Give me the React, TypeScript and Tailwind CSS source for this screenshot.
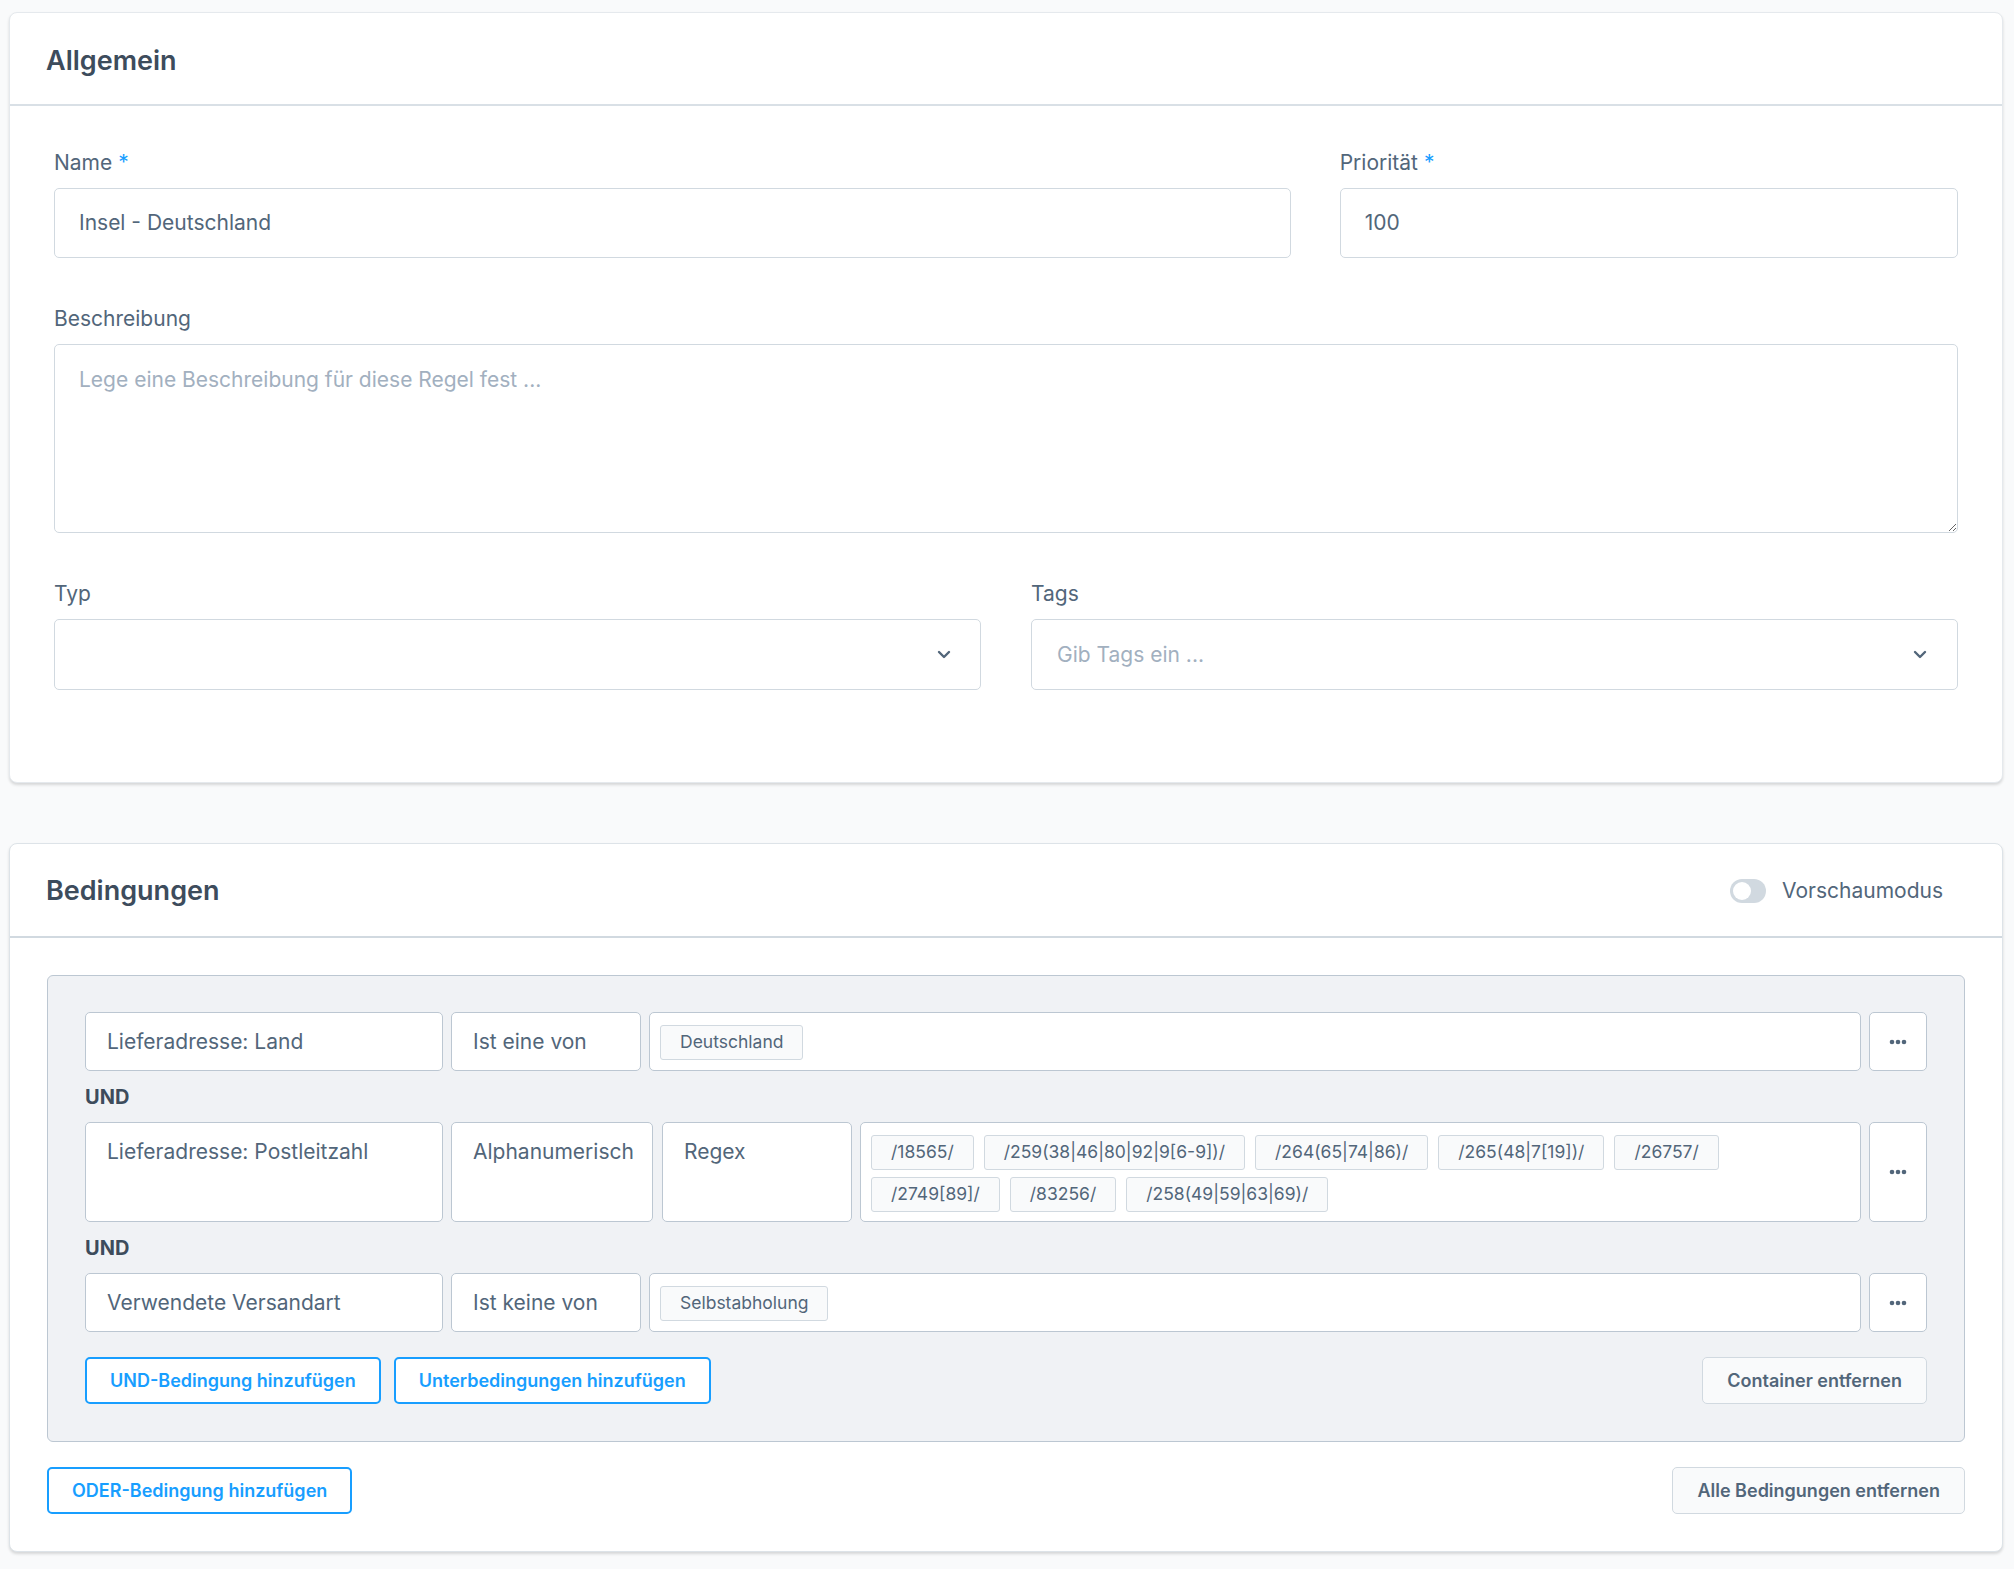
import React from "react";

// Regel-Detailseite: Allgemein + Bedingungen.
const FONT = { fontFamily: "Inter, 'Noto Sans', sans-serif" };

const Chevron: React.FC = () => (
  <svg width="14" height="9" viewBox="0 0 14 9" fill="none">
    <path d="M2 2l5 5 5-5" stroke="#52667a" strokeWidth="2.4" strokeLinecap="round" strokeLinejoin="round" />
  </svg>
);

const Dots: React.FC = () => (
  <svg width="18" height="6" viewBox="0 0 18 6" fill="#52667a">
    <circle cx="3" cy="3" r="2.3" />
    <circle cx="9" cy="3" r="2.3" />
    <circle cx="15" cy="3" r="2.3" />
  </svg>
);

interface FieldProps {
  label: string;
  required?: boolean;
  children: React.ReactNode;
}

const Field: React.FC<FieldProps> = ({ label, required, children }) => (
  <div className="flex flex-col">
    <label className="mb-[11px] text-[21px] leading-[28px] text-[#52667a]">
      {label}
      {required && <span className="ml-[6px] text-[#189eff]">*</span>}
    </label>
    {children}
  </div>
);

const Tag: React.FC<{ text: string }> = ({ text }) => (
  <span className="flex h-[35px] items-center rounded-[3px] border border-[#d1d9e0] bg-[#f9fafb] px-[19px] text-[17.5px] text-[#52667a]">
    {text}
  </span>
);

const Box: React.FC<{ className?: string; children?: React.ReactNode }> = ({ className = "", children }) => (
  <div className={`rounded-[5px] border border-[#bcc7d2] bg-white px-[21px] pt-[15px] text-[21px] leading-[28px] text-[#52667a] ${className}`}>
    {children}
  </div>
);

const TagBox: React.FC<{ tags: string[] }> = ({ tags }) => (
  <div className="flex flex-1 flex-wrap content-start gap-x-[10px] gap-y-[7px] rounded-[5px] border border-[#bcc7d2] bg-white px-[10px] pt-[12px] pb-[9px]">
    {tags.map((t) => (
      <Tag key={t} text={t} />
    ))}
  </div>
);

const DotsButton: React.FC = () => (
  <button className="flex w-[58px] items-center justify-center rounded-[5px] border border-[#bcc7d2] bg-white">
    <Dots />
  </button>
);

const Und: React.FC = () => (
  <div className="flex h-[51px] items-center text-[20px] font-bold text-[#3d4c5c]">UND</div>
);

export default function App() {
  return (
    <div className="min-h-screen bg-[#f9fafb] pt-[12px] pr-[11px] pb-[16px] pl-[9px]" style={FONT}>
      {/* Allgemein */}
      <section className="rounded-[8px] border border-[#e5e9ed] bg-white shadow-[0_2px_3px_rgba(0,0,0,0.14)]">
        <header className="flex h-[93px] items-center border-b-2 border-[#d9e0e6] px-[36px] pt-[5px]">
          <h2 className="text-[27px] font-semibold text-[#3d4c5c]">Allgemein</h2>
        </header>
        <div className="flex flex-col gap-[47px] px-[44px] pt-[43px] pb-[92px]">
          <div className="grid grid-cols-[2fr_1fr] gap-x-[49px]">
            <Field label="Name" required>
              <div className="flex h-[70px] items-center rounded-[5px] border border-[#d1d9e0] px-[24px] text-[21px] text-[#52667a]">
                Insel - Deutschland
              </div>
            </Field>
            <Field label="Priorität" required>
              <div className="flex h-[70px] items-center rounded-[5px] border border-[#d1d9e0] px-[24px] text-[21px] text-[#52667a]">
                100
              </div>
            </Field>
          </div>
          <Field label="Beschreibung">
            <textarea
              className="h-[189px] rounded-[5px] border border-[#d1d9e0] px-[24px] py-[21px] text-[21px] leading-[28px] text-[#52667a] outline-none placeholder:text-[#a2b0bf]"
              placeholder="Lege eine Beschreibung für diese Regel fest ..."
            />
          </Field>
          <div className="grid grid-cols-2 gap-x-[50px]">
            <Field label="Typ">
              <div className="flex h-[71px] items-center justify-end rounded-[5px] border border-[#d1d9e0] pr-[29px]">
                <Chevron />
              </div>
            </Field>
            <Field label="Tags">
              <div className="flex h-[71px] items-center justify-between rounded-[5px] border border-[#d1d9e0] pr-[30px] pl-[25px]">
                <span className="text-[21px] text-[#a2b0bf]">Gib Tags ein ...</span>
                <Chevron />
              </div>
            </Field>
          </div>
        </div>
      </section>

      {/* Bedingungen */}
      <section className="mt-[60px] rounded-[8px] border border-[#dde3e8] bg-white shadow-[0_2px_3px_rgba(0,0,0,0.14)]">
        <header className="flex h-[94px] items-center justify-between border-b-2 border-[#d1d9e0] pr-[59px] pl-[36px] pt-[2px]">
          <h2 className="text-[27px] font-semibold text-[#3d4c5c]">Bedingungen</h2>
          <div className="flex items-center gap-[16px]">
            <span className="relative h-[24px] w-[36px] rounded-full bg-[#d1d9e0]">
              <span className="absolute top-[3px] left-[3px] h-[18px] w-[18px] rounded-full bg-white" />
            </span>
            <span className="text-[21px] text-[#52667a]">Vorschaumodus</span>
          </div>
        </header>
        <div className="px-[37px] pt-[37px] pb-[37px]">
          <div className="rounded-[6px] border border-[#bcc7d2] bg-[#f0f2f5] px-[37px] pt-[36px] pb-[37px]">
            <div className="flex h-[59px] gap-[8px]">
              <Box className="w-[358px]">Lieferadresse: Land</Box>
              <Box className="w-[190px]">Ist eine von</Box>
              <TagBox tags={["Deutschland"]} />
              <DotsButton />
            </div>
            <Und />
            <div className="flex h-[100px] gap-[8px]">
              <Box className="w-[358px]">Lieferadresse: Postleitzahl</Box>
              <Box className="w-[202px]">Alphanumerisch</Box>
              <Box className="w-[190px] ml-[1px]">Regex</Box>
              <TagBox
                tags={[
                  "/18565/",
                  "/259(38|46|80|92|9[6-9])/",
                  "/264(65|74|86)/",
                  "/265(48|7[19])/",
                  "/26757/",
                  "/2749[89]/",
                  "/83256/",
                  "/258(49|59|63|69)/",
                ]}
              />
              <DotsButton />
            </div>
            <Und />
            <div className="flex h-[59px] gap-[8px]">
              <Box className="w-[358px]">Verwendete Versandart</Box>
              <Box className="w-[190px]">Ist keine von</Box>
              <TagBox tags={["Selbstabholung"]} />
              <DotsButton />
            </div>
            <div className="mt-[25px] flex items-center justify-between">
              <div className="flex gap-[13px]">
                <button className="h-[47px] rounded-[5px] border-2 border-[#189eff] bg-white px-[23px] text-[18px] font-semibold text-[#189eff]">
                  UND-Bedingung hinzufügen
                </button>
                <button className="h-[47px] rounded-[5px] border-2 border-[#189eff] bg-white px-[23px] text-[18px] font-semibold text-[#189eff]">
                  Unterbedingungen hinzufügen
                </button>
              </div>
              <button className="h-[47px] rounded-[5px] border border-[#d1d9e0] bg-[#f9fafb] px-[24px] text-[18px] font-semibold text-[#52667a]">
                Container entfernen
              </button>
            </div>
          </div>
          <div className="mt-[25px] flex items-center justify-between">
            <button className="h-[47px] rounded-[5px] border-2 border-[#189eff] bg-white px-[23px] text-[18px] font-semibold text-[#189eff]">
              ODER-Bedingung hinzufügen
            </button>
            <button className="h-[47px] rounded-[5px] border border-[#d1d9e0] bg-[#f9fafb] px-[24px] text-[18px] font-semibold text-[#52667a]">
              Alle Bedingungen entfernen
            </button>
          </div>
        </div>
      </section>
    </div>
  );
}
